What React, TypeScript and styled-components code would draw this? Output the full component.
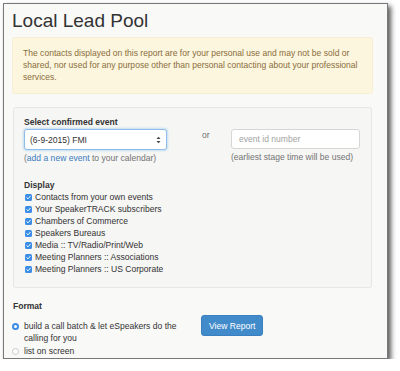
import React from "react";
import styled, { createGlobalStyle } from "styled-components";

const GlobalStyle = createGlobalStyle`
  html, body {
    margin: 0;
    padding: 0;
    background: #ffffff;
  }
  body {
    font-family: "Liberation Sans", Helvetica, Arial, sans-serif;
    font-size: 8.55px;
    line-height: 12px;
    color: #333333;
  }
`;

const displayOptions = [
  "Contacts from your own events",
  "Your SpeakerTRACK subscribers",
  "Chambers of Commerce",
  "Speakers Bureaus",
  "Media :: TV/Radio/Print/Web",
  "Meeting Planners :: Associations",
  "Meeting Planners :: US Corporate",
];

const Check = () => (
  <CheckBox>
    <svg width="5" height="5" viewBox="0 0 10 10">
      <path d="M1.5 5.2 L4 7.6 L8.6 2.4" fill="none" stroke="#fff" strokeWidth="1.9" strokeLinecap="round" strokeLinejoin="round" />
    </svg>
  </CheckBox>
);

const SelectArrows = () => (
  <svg width="5" height="8" viewBox="0 0 5 8">
    <path d="M0.5 3 L2.5 0.8 L4.5 3 Z" fill="#444" />
    <path d="M0.5 5 L2.5 7.2 L4.5 5 Z" fill="#444" />
  </svg>
);

export default function App() {
  return (
    <>
      <GlobalStyle />
      <Frame>
        <Title>Local Lead Pool</Title>
        <Alert>
          The contacts displayed on this report are for your personal use and may not be sold or
          shared, nor used for any purpose other than personal contacting about your professional
          services.
        </Alert>
        <Well>
          <EventGrid>
            <div>
              <BoldLabel>Select confirmed event</BoldLabel>
              <SelectBox>
                <span>(6-9-2015) FMI</span>
                <SelectArrows />
              </SelectBox>
              <Help>
                (<Link href="#">add a new event</Link> to your calendar)
              </Help>
            </div>
            <Or>or</Or>
            <div>
              <InputBox placeholder="event id number" />
              <Help>(earliest stage time will be used)</Help>
            </div>
          </EventGrid>
          <DisplayGroup>
            <BoldLabel>Display</BoldLabel>
            {displayOptions.map((opt) => (
              <CheckRow key={opt}>
                <Check />
                <span>{opt}</span>
              </CheckRow>
            ))}
          </DisplayGroup>
        </Well>
        <FormatGrid>
          <div>
            <FormatLabel>Format</FormatLabel>
            <RadioList>
              <RadioRow>
                <Radio $checked />
                <span>build a call batch &amp; let eSpeakers do the calling for you</span>
              </RadioRow>
              <RadioRow>
                <Radio />
                <span>list on screen</span>
              </RadioRow>
            </RadioList>
          </div>
          <div>
            <Button>View Report</Button>
          </div>
        </FormatGrid>
      </Frame>
    </>
  );
}

const Frame = styled.div`
  box-sizing: border-box;
  margin: 3px 0 0 3px;
  width: 385px;
  height: 356px;
  overflow: hidden;
  background: #f9f9f8;
  border: 1px solid #787878;
  box-shadow: 3px 3px 5px rgba(0, 0, 0, 0.65);
  padding: 7px 14px 0 8px;
`;

const Title = styled.h2`
  margin: 0;
  font-size: 19px;
  line-height: 20px;
  font-weight: 400;
  color: #333;
`;

const Alert = styled.div`
  margin-top: 6px;
  padding: 9px 10px 10px 10px;
  background: #fcf6df;
  border: 1px solid #f8eed4;
  border-radius: 2.5px;
  color: #8a6d3b;
`;

const Well = styled.div`
  margin: 13px 1px 0 1px;
  padding: 8px 11px 12px 10px;
  background: #f6f6f5;
  border: 1px solid #e6e6e6;
  border-radius: 2.5px;
`;

const EventGrid = styled.div`
  display: grid;
  grid-template-columns: 143px 64px 1fr;
  align-items: start;
`;

const BoldLabel = styled.div`
  font-weight: 700;
`;

const SelectBox = styled.div`
  box-sizing: border-box;
  margin-top: 1px;
  height: 21px;
  display: flex;
  align-items: center;
  justify-content: space-between;
  padding: 0 5px 0 5px;
  background: #ffffff;
  border: 1px solid #8fbde9;
  border-radius: 3px;
  box-shadow: 0 0 2px 1px rgba(102, 175, 233, 0.35);
  color: #333;
`;

const Help = styled.div`
  margin-top: 2px;
  color: #737373;
`;

const Link = styled.a`
  color: #3a7bbf;
  text-decoration: none;
`;

const Or = styled.div`
  padding: 13px 0 0 35px;
  color: #737373;
`;

const InputBox = styled.input`
  box-sizing: border-box;
  display: block;
  width: 100%;
  height: 20px;
  margin: 13px 0 0 0;
  padding: 0 7px;
  background: #ffffff;
  border: 1px solid #d6d6d6;
  border-radius: 3px;
  font-family: inherit;
  font-size: 8.55px;
  color: #333;
  outline: none;

  &::placeholder {
    color: #a3a3a3;
  }
`;

const DisplayGroup = styled.div`
  margin-top: 15px;
`;

const CheckRow = styled.div`
  display: flex;
  align-items: center;
  gap: 3px;
  height: 12px;
  padding-left: 1px;
`;

const CheckBox = styled.span`
  box-sizing: border-box;
  width: 7px;
  height: 7px;
  border-radius: 1.5px;
  background: #3b8de6;
  display: inline-flex;
  align-items: center;
  justify-content: center;
  flex: none;
`;

const FormatGrid = styled.div`
  display: grid;
  grid-template-columns: 189px auto;
  margin-top: 12px;
`;

const FormatLabel = styled.div`
  font-weight: 700;
  padding-left: 1px;
`;

const RadioList = styled.div`
  margin-top: 8px;
  width: 178px;
`;

const RadioRow = styled.div`
  display: grid;
  grid-template-columns: 7px 1fr;
  column-gap: 5px;
  line-height: 12.4px;
`;

const Radio = styled.span<{ $checked?: boolean }>`
  box-sizing: border-box;
  margin-top: 2.7px;
  width: 7px;
  height: 7px;
  border-radius: 50%;
  background: #ffffff;
  border: ${(p) => (p.$checked ? "2.3px solid #3b8de6" : "0.8px solid #c9c9c9")};
`;

const Button = styled.button`
  margin-top: 15px;
  height: 21px;
  padding: 0 7px;
  background: #428bca;
  border: 1px solid #3a7fbf;
  border-radius: 3px;
  color: #ffffff;
  font-family: inherit;
  font-size: 8.55px;
  cursor: pointer;
`;
